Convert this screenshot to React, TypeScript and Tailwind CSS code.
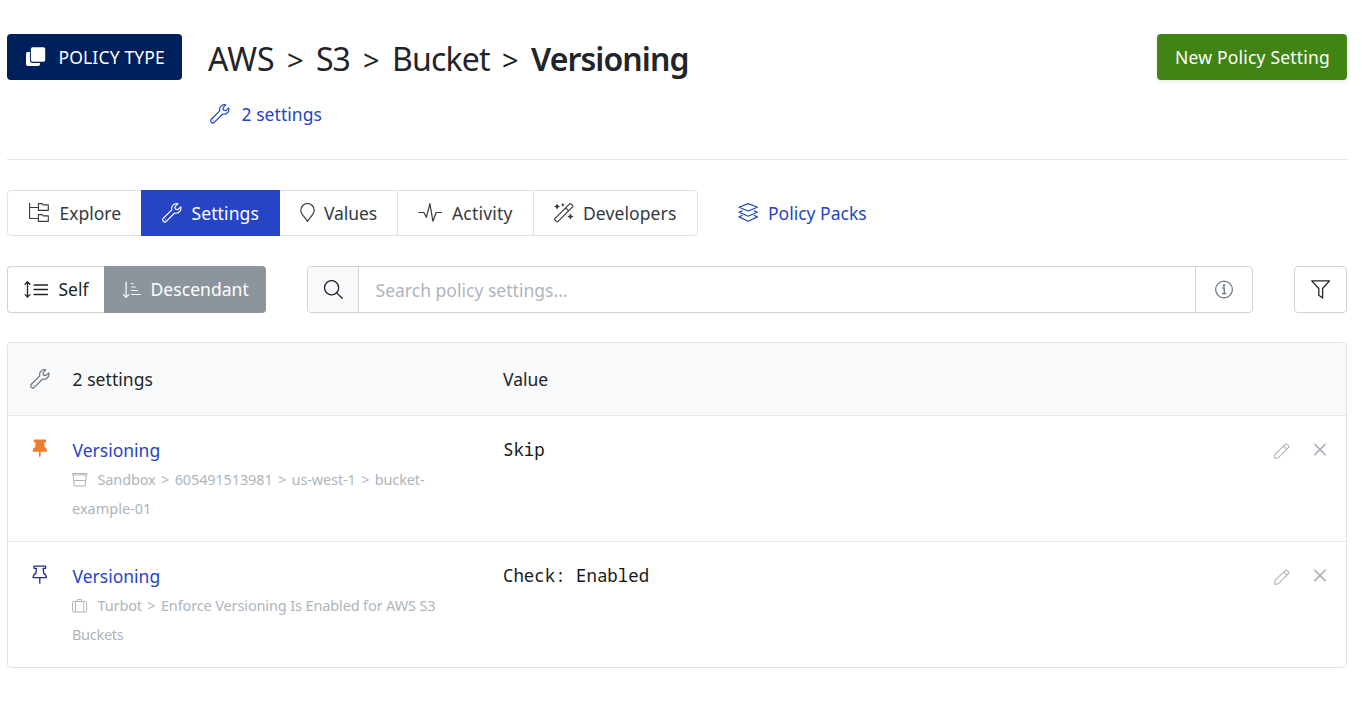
import React from 'react';

type IconProps = { className?: string };

function Wrench({ className = '' }: IconProps) {
  return (
    <svg viewBox="0 0 20 20" className={'h-5 w-5 shrink-0 ' + className} fill="none" stroke="currentColor" strokeWidth="1.2" strokeLinejoin="round">
      <path d="M18.7 3.9l-2.8 2.7-2.5-.4-.4-2.500 2.800-2.900a4.900 4.900 0 0 0-6 6.100L1.300 15.300a2 2 0 0 0 3 3l8.300-8.300a4.900 4.900 0 0 0 6.100-6.100z" />
      <path d="M3.300 16.200h.2" strokeLinecap="round" strokeWidth=".8" />
    </svg>
  );
}

function Clone() {
  return (
    <svg viewBox="0 0 20 20" className="h-5 w-5 shrink-0" fill="currentColor">
      <path d="M3.900 5H1.800A1.800 1.800 0 0 0 0 6.800v10.400A1.800 1.800 0 0 0 1.800 19h10.400a1.800 1.800 0 0 0 1.800-1.800v-1.300H6.700a2.800 2.800 0 0 1-2.800-2.800z" />
      <rect x="4.900" y="0.200" width="14.300" height="14.500" rx="1.800" />
    </svg>
  );
}

function FolderTree() {
  return (
    <svg viewBox="0 0 20 20" className="h-5 w-5 shrink-0" fill="none" stroke="currentColor" strokeWidth="1.100" strokeLinejoin="round">
      <path d="M.6 0v15.500h8.600M.6 4.500h8.600" />
      <path d="M9.400.600h3.600l1.300 1.300h5v5.500H9.400zM9.400 11.600h3.600l1.300 1.300h5v5.500H9.400z" />
    </svg>
  );
}

function MapMarker() {
  return (
    <svg viewBox="0 0 15 20" className="h-5 w-[15px] shrink-0" fill="none" stroke="currentColor" strokeWidth="1.200" strokeLinejoin="round">
      <path d="M7.500 18.500C6.500 16 .8 11.500.8 7.200a6.700 6.700 0 0 1 13.400 0c0 4.300-5.700 8.800-6.700 11.300z" />
    </svg>
  );
}

function Pulse() {
  return (
    <svg viewBox="0 0 25 20" className="h-5 w-[25px] shrink-0" fill="none" stroke="currentColor" strokeWidth="1.200" strokeLinejoin="round" strokeLinecap="round">
      <path d="M.8 9.500h5.100l2.500 4.800L11.900.700l3 17.500 3.300-8.700h5.300" />
    </svg>
  );
}

function Wand() {
  return (
    <svg viewBox="0 0 20 20" className="h-5 w-5 shrink-0" fill="none" stroke="currentColor" strokeWidth="1.200" strokeLinejoin="round">
      <path d="M.9 15.700L15.700.900q.6-.5 1.200 0l1.700 1.700q.5.600 0 1.200L3.800 18.600q-.6.500-1.200 0L.9 16.900q-.5-.6 0-1.200zM11.700 4.900l2.900 2.900" />
      <path fill="currentColor" stroke="none" d="M3.100.500l1 2.100 2.100 1-2.100 1-1 2.100-1-2.100-2.100-1 2.100-1zM8.800-.2l.6 1.500 1.500.6-1.500.6-.6 1.500-.6-1.500-1.500-.6 1.500-.6zM16.400 10.400l1 2.200 2.200 1-2.200 1-1 2.200-1-2.200-2.200-1 2.200-1z" />
    </svg>
  );
}

function Layers() {
  return (
    <svg viewBox="0 0 20 20" className="h-5 w-5 shrink-0" fill="none" stroke="currentColor" strokeWidth="1.200" strokeLinejoin="round">
      <path d="M10.200.600l9.200 3.700-9.200 3.700L1 4.300z" />
      <path d="M4.500 7.600L1 9.200l9.200 4 9.200-4-3.500-1.600M4.500 12.300L1 13.900l9.200 4.400 9.200-4.400-3.500-1.600" />
    </svg>
  );
}

function LineHeight() {
  return (
    <svg viewBox="0 0 24 20" className="h-5 w-6 shrink-0" fill="none" stroke="currentColor" strokeWidth="1.300" strokeLinejoin="round" strokeLinecap="round">
      <path d="M3.500 2.200v14.600M1.100 4.300l2.400-2.500 2.400 2.500M1.100 14.600L3.500 17l2.400-2.400" />
      <path d="M10 5h13.500M10 9.500h13.500M10 14.500h13.500" />
    </svg>
  );
}

function SortAmount() {
  return (
    <svg viewBox="0 0 20 20" className="h-5 w-5 shrink-0" fill="none" stroke="currentColor" strokeWidth="1.200" strokeLinejoin="round" strokeLinecap="round">
      <path d="M4.100 2v15.200M1.400 14.600l2.700 2.700 2.700-2.700" />
      <path d="M9.700 3.500h1.200M9.700 7h3.600M9.700 10.500h5.700M9.700 14.500h8.600" />
    </svg>
  );
}

function Search() {
  return (
    <svg viewBox="0 0 20 20" className="h-5 w-5 shrink-0" fill="none" stroke="currentColor" strokeWidth="1.300" strokeLinecap="round">
      <circle cx="8.600" cy="7.700" r="7.100" />
      <path d="M13.700 12.900l5.500 5.400" />
    </svg>
  );
}

function Info() {
  return (
    <svg viewBox="0 0 20 20" className="h-5 w-5 shrink-0" fill="none" stroke="currentColor" strokeWidth="1.200">
      <circle cx="10" cy="9.500" r="8.400" />
      <path d="M8.300 8h2v5.300M8 13.600h4.300" strokeWidth="1.300" />
      <circle cx="10" cy="5.400" r="1.200" fill="currentColor" stroke="none" />
    </svg>
  );
}

function Funnel() {
  return (
    <svg viewBox="0 0 20 20" className="h-5 w-5 shrink-0" fill="none" stroke="currentColor" strokeWidth="1.300" strokeLinejoin="round">
      <path d="M.7.900h17.800l-6.900 7.600v9.500L7.800 15.200V8.500z" />
    </svg>
  );
}

function PinSolid() {
  return (
    <svg viewBox="0 0 16 20" className="h-5 w-4 shrink-0" fill="currentColor">
      <path d="M2.300.500h11.200q.6 0 .6.600v1.800q0 .6-.6.600h-1.300l.4 4.500q2.500 1.400 2.500 4.100 0 .6-.6.600H8.700v3.900L7.900 19l-.9-2.300v-4H1.100q-.6 0-.6-.6 0-2.700 2.700-4.100l.4-4.500H2.300q-.6 0-.6-.6V1.100q0-.6.600-.6z" />
    </svg>
  );
}

function PinOutline() {
  return (
    <svg viewBox="0 0 16 20" className="h-5 w-4 shrink-0" fill="none" stroke="currentColor" strokeWidth="1.300" strokeLinejoin="round">
      <path d="M2 1.100h11.600v2.200H11.200l.5 5.100q2.600 1.200 2.700 4.200H1.100q.1-3 2.800-4.200l.5-5.100H2zM7.800 12.600v6.200" />
    </svg>
  );
}

function Bucket() {
  return (
    <svg viewBox="0 0 16 14" className="h-3.5 w-4 shrink-0" fill="none" stroke="currentColor" strokeWidth="1" strokeLinejoin="round">
      <path d="M.5.500h14.400v1.400H.5zM1.200 2l1.100 11h10.800l1.100-11M2 7.500h11.500" />
    </svg>
  );
}

function Suitcase() {
  return (
    <svg viewBox="0 0 16 14" className="h-3.5 w-4 shrink-0" fill="none" stroke="currentColor" strokeWidth="1" strokeLinejoin="round">
      <rect x=".5" y="2.500" width="14.200" height="10.500" rx="1.200" />
      <path d="M3.500 13V2.500M11.700 13V2.500M5.500 2.500V1q0-.5.500-.5h3.300q.5 0 .5.500v1.500" />
    </svg>
  );
}

function Pencil() {
  return (
    <svg viewBox="0 0 16 16" className="h-4 w-4 shrink-0" fill="none" stroke="currentColor" strokeWidth="1.100" strokeLinejoin="round">
      <path d="M.6 15.200l.3-3.600L10.900 1.600q1.200-1.200 2.500 0l.8.800q1.200 1.300 0 2.500L4.200 14.900zM9.600 3l3.200 3.200" />
    </svg>
  );
}

function Cross() {
  return (
    <svg viewBox="0 0 12 13" className="h-[13px] w-3 shrink-0" fill="none" stroke="currentColor" strokeWidth="1.700" strokeLinecap="round">
      <path d="M.9 1.400l10.200 10.200M11.100 1.400L.9 11.600" />
    </svg>
  );
}

function Chevron({ className }: { className: string }) {
  return <span className={'text-[29px] ' + className}>&gt;</span>;
}

function Trail({ parts }: { parts: string[] }) {
  return (
    <span className="ml-[9.5px] tracking-[-0.13px]">
      {parts.map((part, i) => (
        <React.Fragment key={part}>
          {i > 0 && <span className="inline-block w-[19px] text-center"> &gt; </span>}
          {part}
        </React.Fragment>
      ))}
    </span>
  );
}

type RowProps = {
  pin: React.ReactNode;
  kind: React.ReactNode;
  firstLine: string[];
  secondLine: React.ReactNode;
  value: string;
};

function SettingRow({ pin, kind, firstLine, secondLine, value }: RowProps) {
  return (
    <div className="flex h-[126px] border-t border-[#e5e7ea]">
      <div className="flex w-16 shrink-0 justify-center pt-[23px]">{pin}</div>
      <div className="w-[431px] shrink-0 pt-5">
        <a className="block h-7 pl-[0.5px] leading-7 text-[#2644c4]">Versioning</a>
        <div className="pt-0.5 text-[14.5px] text-[#adb5bd]">
          <div className="flex h-7 items-center whitespace-nowrap">
            {kind}
            <Trail parts={firstLine} />
          </div>
          {secondLine}
        </div>
      </div>
      <div className="grow whitespace-pre pt-[19px] font-['Noto_Sans_Mono','DejaVu_Sans_Mono',monospace] text-[17.4px] leading-7 text-[#16191c]">{value}</div>
      <div className="flex gap-[24px] pt-[27px] pr-5 text-[#adb5bd]">
        <Pencil />
        <Cross />
      </div>
    </div>
  );
}

export default function App() {
  return (
    <div className="h-[723px] w-[1362px] overflow-hidden bg-white pr-[15px] pl-[7px] font-['Noto_Sans','Open_Sans',sans-serif] text-[17.5px] text-[#212529]">
      <header className="flex h-[160px] items-start border-b border-[#e1e4e8] pt-[34px]">
        <div className="flex h-[46px] w-[175px] items-center rounded-[4px] bg-[#00205b] pl-[19px] text-white">
          <Clone />
          <span className="ml-[12.5px] whitespace-nowrap tracking-[0.15px]">POLICY TYPE</span>
        </div>
        <div className="ml-[26px] grow">
          <h1 className="flex h-[50px] items-baseline whitespace-nowrap text-[32px] leading-[50px]">
            <span className="w-[79px]">AWS</span>
            <Chevron className="w-[29px]" />
            <span className="w-[47px] tracking-[-1px]">S3</span>
            <Chevron className="w-[29px]" />
            <span className="w-[110px] tracking-[-0.8px]">Bucket</span>
            <Chevron className="w-[29px]" />
            <span className="font-semibold tracking-[-0.9px]">Versioning</span>
          </h1>
          <a className="mt-[16px] flex h-7 items-center text-[#2644c4]">
            <span className="ml-0.5"><Wrench /></span>
            <span className="ml-[11.5px] tracking-[0.05px]">2 settings</span>
          </a>
        </div>
        <button className="flex h-[46px] w-[190px] items-center justify-center rounded-[4px] bg-[#418314] pl-px tracking-[0.2px] text-white shadow-[0_2px_4px_rgba(0,0,0,0.075)]">New Policy Setting</button>
      </header>

      <nav className="mt-[30px] flex h-[46px] text-[#343a40]">
        <div className="flex w-[691px] rounded-[4px] border border-[#dee2e6]">
          <a className="flex w-[133px] items-center pl-[21px]"><FolderTree /><span className="ml-[10.5px]">Explore</span></a>
          <a className="-my-px flex w-[139px] items-center bg-[#2644c4] pl-[21px] text-white"><Wrench /><span className="ml-[9.5px] tracking-[0.1px]">Settings</span></a>
          <a className="flex w-[118px] items-center border-r border-[#dee2e6] pl-[19.5px]"><MapMarker /><span className="ml-[9.5px] tracking-[-0.1px]">Values</span></a>
          <a className="flex w-[136px] items-center border-r border-[#dee2e6] pl-[19.5px]"><Pulse /><span className="ml-[9.5px] tracking-[0.19px]">Activity</span></a>
          <a className="flex items-center pl-[20px]"><Wand /><span className="ml-[9px] tracking-[0.1px]">Developers</span></a>
        </div>
        <a className="ml-[40px] flex items-center text-[#2644c4]"><Layers /><span className="ml-[10px]">Policy Packs</span></a>
      </nav>

      <div className="mt-[30px] flex h-[47px]">
        <div className="flex w-[259px]">
          <button className="flex w-[97px] items-center rounded-l-[4px] border border-r-0 border-[#ced4da] pl-[15.5px]"><LineHeight /><span className="ml-[11px]">Self</span></button>
          <button className="flex w-[162px] items-center rounded-r-[4px] bg-[#8d959c] pl-[17.5px] text-white"><SortAmount /><span className="ml-[9px] tracking-[0.05px]">Descendant</span></button>
        </div>
        <div className="ml-[41px] flex w-[946px] rounded-[4px] border border-[#ced4da]">
          <div className="flex w-[50px] items-center justify-center rounded-l-[3px] bg-[#f8f9fa]"><Search /></div>
          <div className="flex grow items-center border-x border-[#ced4da] pt-px pl-[16.5px] tracking-[0.02px] text-[#adb5bd]">Search policy settings...</div>
          <div className="flex w-[56px] items-center justify-center text-[#6c757d]"><Info /></div>
        </div>
        <button className="ml-[41px] flex w-[53px] items-center justify-center rounded-[4px] border border-[#ced4da]"><Funnel /></button>
      </div>

      <section className="mt-[29px] rounded-[4px] border border-[#dee2e6]">
        <div className="flex h-[72px] items-center rounded-t-[3px] bg-[#f8f9fa]">
          <div className="flex w-16 justify-center text-[#6c757d]"><Wrench /></div>
          <div className="w-[431px] pl-[0.5px] tracking-[0.05px]">2 settings</div>
          <div>Value</div>
        </div>
        <SettingRow
          pin={<span className="h-5 text-[#ee7c2f]"><PinSolid /></span>}
          kind={<Bucket />}
          firstLine={['Sandbox', '605491513981', 'us-west-1', 'bucket-']}
          secondLine={<div className="h-7 leading-7">example-01</div>}
          value="Skip"
        />
        <SettingRow
          pin={<span className="h-5 text-[#1b2f86]"><PinOutline /></span>}
          kind={<Suitcase />}
          firstLine={['Turbot', 'Enforce Versioning Is Enabled for AWS S3']}
          secondLine={<div className="h-[29px] leading-[29px] tracking-[-0.3px]">Buckets</div>}
          value="Check: Enabled"
        />
      </section>
    </div>
  );
}
